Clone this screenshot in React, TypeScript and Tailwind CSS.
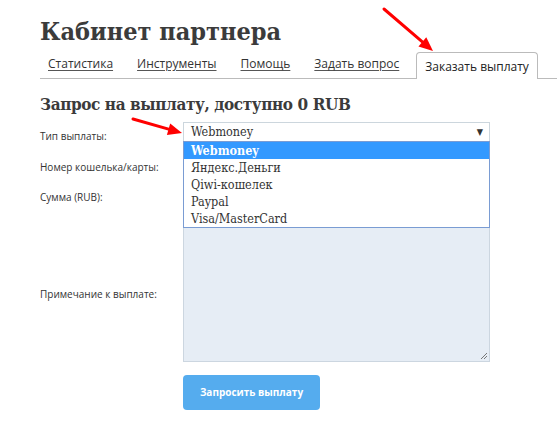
import React from 'react';

const tabs = ['Статистика', 'Инструменты', 'Помощь', 'Задать вопрос'];
const options = ['Webmoney', 'Яндекс.Деньги', 'Qiwi-кошелек', 'Paypal', 'Visa/MasterCard'];

const serif = { fontFamily: '"DejaVu Serif Condensed", "DejaVu Serif", serif', fontStretch: 'condensed' as const };

const Arrow: React.FC<{ x1: number; y1: number; x2: number; y2: number }> = ({ x1, y1, x2, y2 }) => {
  const a = Math.atan2(y2 - y1, x2 - x1);
  const l = 14;
  const w = 6;
  const bx = x2 - l * Math.cos(a);
  const by = y2 - l * Math.sin(a);
  const p1 = `${bx + w * Math.sin(a)},${by - w * Math.cos(a)}`;
  const p2 = `${bx - w * Math.sin(a)},${by + w * Math.cos(a)}`;
  return (
    <g>
      <line x1={x1} y1={y1} x2={bx} y2={by} stroke="#f00" strokeWidth={3} strokeLinecap="round" />
      <polygon points={`${x2},${y2} ${p1} ${p2}`} fill="#f00" />
    </g>
  );
};

const App: React.FC = () => {
  return (
    <div className="relative w-[557px] h-[442px] overflow-hidden bg-white pl-10 text-[#333]" style={{ fontFamily: '"Open Sans", "DejaVu Sans", sans-serif' }}>
      <h1 className="pt-[14px] text-[25px] font-bold leading-[36px] text-[#3b3b3b] whitespace-nowrap" style={serif}>
        Кабинет партнера
      </h1>

      {/* tabs */}
      <div className="mt-[2px] flex items-end gap-2 border-b border-[#bbb] whitespace-nowrap">
        {tabs.map((t) => (
          <a key={t} className="px-2 pb-[5px] text-[12px] leading-[18px] text-[#333] underline underline-offset-2 decoration-[#555]">
            {t}
          </a>
        ))}
        <div className="-mb-px ml-[1px] h-[27px] rounded-t-[4px] border border-b-0 border-[#bbb] bg-white px-2 pt-[5px] text-[12px] leading-[18px] text-[#222]">
          Заказать выплату
        </div>
      </div>

      <h2 className="mt-[13px] text-[17px] font-bold leading-[24px] tracking-[-0.4px] text-[#3b3b3b] whitespace-nowrap" style={serif}>
        Запрос на выплату, доступно 0 RUB
      </h2>

      {/* form */}
      <div className="relative mt-[6px] w-[450px] text-[10px]">
        <div className="flex">
          <div className="w-[143px] shrink-0 pt-[8px] leading-[13px]">Тип выплаты:</div>
          <div className="flex h-[20px] w-[307px] items-center justify-between border border-[#ccd6dd] bg-white pl-[7px] pr-[6px] text-[12.5px] text-[#333]" style={serif}>
            <span className="leading-none">Webmoney</span>
            <span className="text-[9px] leading-none text-[#333]">▼</span>
          </div>
        </div>
        <div className="mt-[12px] flex">
          <div className="w-[143px] shrink-0 pt-[6px] leading-[13px]">Номер кошелька/карты:</div>
          <div className="h-[22px] w-[306px] border border-[#ccd6e0] bg-[#e6edf5]" />
        </div>
        <div className="mt-[11px] flex">
          <div className="w-[143px] shrink-0 pt-[3px] leading-[13px]">Сумма (RUB):</div>
          <div className="h-[22px] w-[306px] border border-[#ccd6e0] bg-[#e6edf5]" />
        </div>
        <div className="mt-[16px] flex items-center">
          <div className="w-[143px] shrink-0 leading-[13px]">Примечание к выплате:</div>
          <div className="relative h-[136px] w-[307px] border border-[#ccd6e0] bg-[#e6edf5]">
            <svg className="absolute bottom-[1px] right-[1px]" width="8" height="8" viewBox="0 0 8 8">
              <line x1="1" y1="7" x2="7" y2="1" stroke="#777" strokeWidth="1" />
              <line x1="4" y1="7" x2="7" y2="4" stroke="#777" strokeWidth="1" />
            </svg>
          </div>
        </div>
        <div className="mt-[13px] flex">
          <div className="w-[143px] shrink-0" />
          <button className="h-[35px] w-[137px] rounded-[4px] bg-[#55acee] text-[10px] font-bold text-white" style={{ fontFamily: '"Open Sans", "DejaVu Sans", sans-serif' }}>
            Запросить выплату
          </button>
        </div>

        {/* open dropdown list */}
        <ul className="absolute left-[143px] top-[19px] w-[307px] border border-[#7a9cd3] bg-white py-0 text-[12.5px] text-[#333]" style={serif}>
          {options.map((o, i) => (
            <li
              key={o}
              className={`h-[17px] pl-[7px] leading-[17px] ${i === 0 ? 'bg-[#3399ff] font-bold text-white' : ''}`}
            >
              {o}
            </li>
          ))}
        </ul>
      </div>

      {/* annotation arrows */}
      <svg className="pointer-events-none absolute left-0 top-0" width="557" height="442">
        <Arrow x1={384} y1={9} x2={433} y2={51} />
        <Arrow x1={133} y1={119} x2={182} y2={133} />
      </svg>
    </div>
  );
};

export default App;
